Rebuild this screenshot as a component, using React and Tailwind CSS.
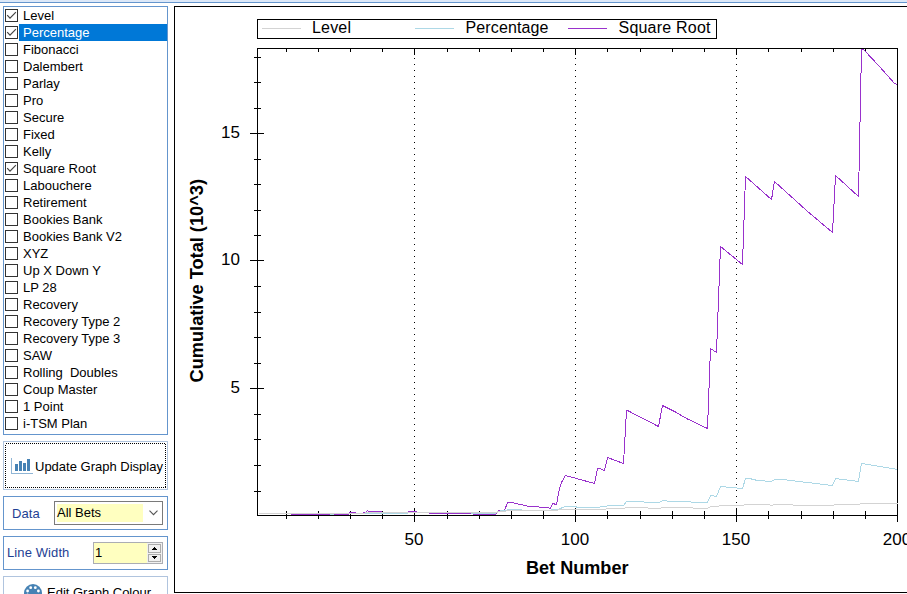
import clsx from 'clsx';

const PLANS = [
  { name: 'Level', checked: true },
  { name: 'Percentage', checked: true, selected: true },
  { name: 'Fibonacci' },
  { name: 'Dalembert' },
  { name: 'Parlay' },
  { name: 'Pro' },
  { name: 'Secure' },
  { name: 'Fixed' },
  { name: 'Kelly' },
  { name: 'Square Root', checked: true },
  { name: 'Labouchere' },
  { name: 'Retirement' },
  { name: 'Bookies Bank' },
  { name: 'Bookies Bank V2' },
  { name: 'XYZ' },
  { name: 'Up X Down Y' },
  { name: 'LP 28' },
  { name: 'Recovery' },
  { name: 'Recovery Type 2' },
  { name: 'Recovery Type 3' },
  { name: 'SAW' },
  { name: 'Rolling  Doubles' },
  { name: 'Coup Master' },
  { name: '1 Point' },
  { name: 'i-TSM Plan' },
];

// Plot frame: left 257, top 48, right 897, bottom 515
const X_TICKS = [
  286, 318, 350, 382, 414, 447, 479, 511, 543, 575,
  607, 640, 672, 704, 736, 768, 801, 833, 865, 897,
];
const X_MAJOR = { 414: '50', 575: '100', 736: '150', 897: '200' };

const Y_TICKS = [
  57, 82, 108, 133, 159, 184, 210, 235, 260,
  286, 312, 337, 363, 388, 414, 439, 465, 491,
];
const Y_MAJOR = { 133: '15', 260: '10', 388: '5' };

const SERIES = [
  {
    name: 'Square Root',
    color: '#9932cc',
    points:
      '258,513 290,513 291,514 348,514 349,512 355,512 356,513 362,513 363,512 365,512 367,510 368,511 381,511 382,512 393,512 394,513 400,513 401,513 407,513 408,511 416,511 417,512 428,512 429,513 471,513 474,514 495,514 498,510 504,510 507,502 511,502 520,504 529,506 547,507 550,508 552,503 556,504 559,488 561,482 565,475 594,483 597,468 599,468 604,470 607,457 623,463 626,410 627,410 658,426 662,405 674,411 686,418 707,428 710,348 716,352 720,246 742,264 745,176 771,199 774,181 806,210 832,232 835,175 858,196 861,49 863,49 879,66 894,83 897,84',
  },
  {
    name: 'Percentage',
    color: '#add8e6',
    points:
      '258,513 329,513 330,514 333,514 334,513 398,513 399,513 407,513 408,512 470,512 471,513 495,513 500,510 506,510 507,509 521,509 522,510 550,510 551,509 557,509 565,506 575,506 577,507 599,507 600,506 606,506 607,505 623,505 626,501 643,501 644,502 659,502 662,500 666,500 667,501 690,501 691,502 707,502 710,495 716,496 720,486 742,488 745,478 749,478 757,480 771,481 774,479 782,479 807,482 832,485 835,478 858,481 861,463 897,469',
  },
  {
    name: 'Level',
    color: '#d3d3d3',
    points:
      '258,513 364,513 365,512 495,512 499,511 505,511 506,510 557,510 558,509 605,509 606,508 624,508 625,507 647,507 648,508 660,508 661,507 692,507 693,508 707,508 710,506 718,506 719,505 743,505 744,504 769,504 770,505 772,505 773,504 792,504 793,505 833,505 834,504 859,504 860,503 897,503',
  },
];

function CheckBox({ checked }) {
  return (
    <svg className="w-[13px] h-[13px] shrink-0" viewBox="0 0 13 13">
      <rect x="0.5" y="0.5" width="12" height="12" fill="#fff" stroke="#333" />
      {checked && (
        <path d="M2.2 6.2 L5 9.2 L10.9 3.2" fill="none" stroke="#444" strokeWidth="1.2" />
      )}
    </svg>
  );
}

function PlanList() {
  return (
    <div className="h-[429px] border border-[#6495cd] bg-white">
      {PLANS.map((plan) => (
        <div key={plan.name} className="flex h-[17px] items-center pl-px">
          <CheckBox checked={plan.checked} />
          <span
            className={clsx(
              'ml-px h-[17px] flex-1 whitespace-pre pl-1 leading-[17px]',
              plan.selected && 'bg-[#0078d7] text-white'
            )}
          >
            {plan.name}
          </span>
        </div>
      ))}
    </div>
  );
}

function BarsIcon() {
  return (
    <svg className="mt-px w-[22px] h-[17px] shrink-0" viewBox="0 0 22 17" shapeRendering="crispEdges">
      <path d="M0 0H1V15H22V16H0Z" fill="#8fb5d5" />
      <path d="M4 6H7V13H4ZM8 3H11V13H8ZM12 5H15V13H12ZM16 1H19V13H16Z" fill="#4682b4" />
    </svg>
  );
}

function PaletteIcon() {
  return (
    <svg className="w-[18px] h-[18px] shrink-0" viewBox="0 0 18 18">
      <circle cx="9" cy="9" r="9" fill="#4682b4" />
      <g fill="#fff">
        <circle cx="6.7" cy="3.7" r="1.4" />
        <circle cx="11.3" cy="3.7" r="1.4" />
        <circle cx="3.6" cy="7" r="1.4" />
        <circle cx="14.4" cy="7" r="1.4" />
        <circle cx="3.6" cy="11" r="1.4" />
        <path d="M9 18V14Q9 11 12 11H18V18Z" />
      </g>
    </svg>
  );
}

function UpdateButton() {
  return (
    <button className="relative mt-[6px] flex h-[49px] w-full items-center border border-[#b0c4de] bg-white pl-[7px]">
      <svg className="absolute left-px top-px h-[45px] w-[161px]" shapeRendering="crispEdges">
        <rect x="0.5" y="0.5" width="160" height="44" fill="none" stroke="#000" strokeDasharray="1 1" />
      </svg>
      <BarsIcon />
      <span className="ml-[2px] mt-[2px] whitespace-nowrap">Update Graph Display</span>
    </button>
  );
}

function DataSelect() {
  return (
    <div className="mt-[6px] flex h-[34px] items-center border border-[#6495cd] bg-white pl-2 pr-1">
      <span className="mt-px w-[42px] tracking-[0.1px] text-[#1e3f94]">Data</span>
      <div className="flex h-6 flex-1 items-center justify-between border border-[#7a7a7a] pl-[2px] pr-1">
        <span className="h-[18px] w-[86px] bg-[#ffffc0] leading-[17px]">All Bets</span>
        <svg className="h-[6px] w-[9px]" viewBox="0 0 9 6">
          <path d="M0.5 0.7L4.5 4.7L8.5 0.7" fill="none" stroke="#555" strokeWidth="1.1" />
        </svg>
      </div>
    </div>
  );
}

function LineWidth() {
  return (
    <div className="mt-[6px] flex h-[34px] items-center justify-between border border-[#6495cd] bg-white pl-[3px] pr-1">
      <span className="tracking-[0.1px] text-[#1e3f94]">Line Width</span>
      <div className="flex h-[22px] w-[70px] border border-[#abadb3] bg-[#f0f0f0]">
        <span className="flex-1 bg-[#ffffc0] pl-px leading-[20px]">1</span>
        <div className="flex w-[15px] flex-col gap-px p-px">
          <div className="flex flex-1 items-center justify-center border border-[#acacac]">
            <svg className="h-[3px] w-[5px]" viewBox="0 0 5 3" shapeRendering="crispEdges">
              <path d="M2 0H3V1H4V2H5V3H0V2H1V1H2Z" />
            </svg>
          </div>
          <div className="flex flex-1 items-center justify-center border border-[#acacac]">
            <svg className="h-[3px] w-[5px]" viewBox="0 0 5 3" shapeRendering="crispEdges">
              <path d="M0 0H5V1H4V2H3V3H2V2H1V1H0Z" />
            </svg>
          </div>
        </div>
      </div>
    </div>
  );
}

function ColourButton() {
  return (
    <button className="mt-[6px] flex h-[34px] w-full items-center border border-[#b0c4de] bg-white pl-5">
      <PaletteIcon />
      <span className="ml-[5px] whitespace-nowrap">Edit Graph Colour</span>
    </button>
  );
}

function Legend() {
  return (
    <g className="text-[16px]">
      <rect x="257.5" y="19.5" width="459" height="19" fill="none" stroke="#000" />
      <path d="M262 28.5H301" stroke="#d3d3d3" />
      <path d="M415 28.5H454" stroke="#add8e6" />
      <path d="M568 28.5H607" stroke="#9932cc" />
      <text x="312" y="33" textLength="39">Level</text>
      <text x="465.5" y="33" textLength="83">Percentage</text>
      <text x="618.5" y="33" textLength="92">Square Root</text>
    </g>
  );
}

// The svg starts at page position 174,6, so its viewBox does too
function Chart() {
  return (
    <svg
      className="h-[588px] w-[733px] shrink-0 text-[17px]"
      viewBox="174 6 733 588"
      shapeRendering="crispEdges"
    >
      <path d="M910 6.5H174.5V592.5H910" fill="none" stroke="#000" />
      <Legend />

      <rect x="257.5" y="48.5" width="640" height="467" fill="none" stroke="#000" />
      {X_TICKS.map((x) => {
        const major = X_MAJOR[x];
        return (
          <g key={x}>
            <rect x={x} y="48" width="1" height={major ? 7 : 4} />
            <rect x={x} y={major ? 508 : 511} width="1" height={major ? 14 : 8} />
            {major && x < 897 && (
              <path d={`M${x + 0.5} 58V503`} stroke="#000" strokeDasharray="1 5" />
            )}
            {major && (
              <text x={x} y="545" textAnchor="middle">
                {major}
              </text>
            )}
          </g>
        );
      })}
      {Y_TICKS.map((y) => {
        const major = Y_MAJOR[y];
        return (
          <g key={y}>
            <rect x={major ? 250 : 254} y={y} width={major ? 14 : 7} height="1" />
            {major && (
              <text x="240" y={y + 5} textAnchor="end">
                {major}
              </text>
            )}
          </g>
        );
      })}

      {SERIES.map(({ name, color, points }) => (
        <polyline
          key={name}
          points={points}
          transform="translate(0.5 0.5)"
          fill="none"
          stroke={color}
        />
      ))}

      <g className="text-[18px] font-bold">
        <text x="526" y="574" textLength="102.5" lengthAdjust="spacingAndGlyphs">
          Bet Number
        </text>
        <text
          transform="translate(203 382.5) rotate(-90)"
          textLength="203.5"
          lengthAdjust="spacingAndGlyphs"
        >
          Cumulative Total (10^3)
        </text>
      </g>
    </svg>
  );
}

export default function App() {
  return (
    <div className="h-[594px] w-[907px] overflow-hidden bg-white font-['Liberation_Sans',Arial,sans-serif] text-[13px] text-black">
      <div className="h-[3px] border-b border-[#6495cd] bg-[#dce8f8]" />
      <div className="flex pt-[3px]">
        <div className="mr-[6px] w-[165px] shrink-0 ml-[3px]">
          <PlanList />
          <UpdateButton />
          <DataSelect />
          <LineWidth />
          <ColourButton />
        </div>
        <Chart />
      </div>
    </div>
  );
}
